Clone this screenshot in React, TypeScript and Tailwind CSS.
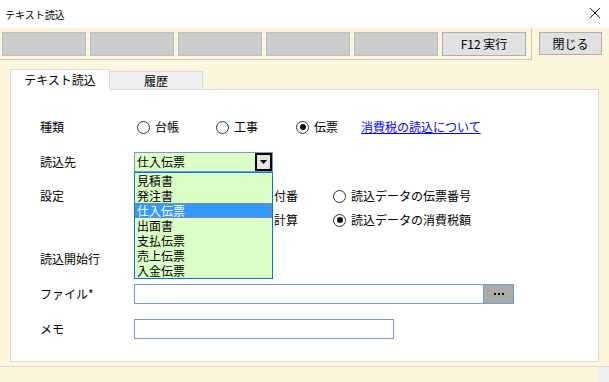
import React from 'react';

const font = { fontFamily: '"Noto Sans CJK JP", "Liberation Sans", sans-serif' };

const Radio = ({ checked, label, className = '' }: { checked?: boolean; label: string; className?: string }) => (
    <div className={`flex items-center gap-[5px] ${className}`}>
        <span className="w-[13px] h-[13px] rounded-full border border-[#333] bg-white flex items-center justify-center shrink-0">
            {checked && <span className="w-[6px] h-[6px] rounded-full bg-[#111]" />}
        </span>
        <span className="whitespace-nowrap">{label}</span>
    </div>
);

const App = () => {
    const items = ['見積書', '発注書', '仕入伝票', '出面書', '支払伝票', '売上伝票', '入金伝票'];

    return (
        <div className="w-[609px] h-[382px] bg-white overflow-hidden text-[12px] text-black flex flex-col" style={font}>
            {/* title bar */}
            <div className="h-[28px] flex items-center justify-between pl-[5px] pr-[8px] shrink-0">
                <span className="text-[10px]">テキスト読込</span>
                <svg width="12" height="12" viewBox="0 0 12 12" className="mb-[2px]">
                    <path d="M1 1 L11 11 M11 1 L1 11" stroke="#222" strokeWidth="1" />
                </svg>
            </div>

            <div className="flex-1 bg-[#fef6dc] flex flex-col">
                {/* toolbar */}
                <div className="flex items-start h-[32px]">
                    <div className="w-[532px] h-[32px] border-r border-b border-[#c4c4c4] flex gap-[4px] pl-[2px] pt-[4px]">
                        {[0, 1, 2, 3, 4].map((i) => (
                            <div key={i} className="w-[84px] h-[24px] bg-[#cccccc] border border-[#bfbfbf]" />
                        ))}
                        <button className="w-[84px] h-[24px] bg-[#e1e1e1] border border-[#adadad] text-[12px]">F12 実行</button>
                    </div>
                    <button className="ml-[7px] mt-[4px] w-[63px] h-[23px] bg-[#e1e1e1] border border-[#adadad] text-[12px]">閉じる</button>
                </div>

                {/* tabs */}
                <div className="flex items-end ml-[10px] mt-[9px] h-[20px]">
                    <div className="w-[100px] h-[21px] bg-white border border-b-0 border-[#d9d9d9] flex items-center justify-center relative top-[1px]">
                        テキスト読込
                    </div>
                    <div className="w-[93px] h-[18px] bg-[#f0f0f0] border border-b-0 border-l-0 border-[#d9d9d9] flex items-center justify-center">
                        履歴
                    </div>
                </div>

                {/* panel */}
                <div className="ml-[10px] w-[589px] h-[273px] bg-white border border-[#d9d9d9] pl-[29px] pt-[27px] flex flex-col">
                    <div className="flex items-center h-[20px]">
                        <span className="w-[94px]">種類</span>
                        <Radio label="台帳" className="ml-[3px] w-[79px]" />
                        <Radio label="工事" className="w-[80px]" />
                        <Radio checked label="伝票" className="w-[65px]" />
                        <a className="text-[#0000ff] underline whitespace-nowrap">消費税の読込について</a>
                    </div>

                    <div className="flex items-center h-[20px] mt-[15px]">
                        <span className="w-[94px]">読込先</span>
                        <div className="relative w-[139px] h-[20px] z-10">
                            <div className="w-full h-full bg-[#dcffc8] border border-[#7a9cc0] flex items-center justify-between pl-[2px]">
                                <span>仕入伝票</span>
                                <span className="w-[17px] h-[18px] bg-[#e3e3e3] border-2 border-black flex items-center justify-center">
                                    <svg width="7" height="4" viewBox="0 0 7 4">
                                        <path d="M0 0 H7 L3.5 4 Z" fill="#000" />
                                    </svg>
                                </span>
                            </div>
                            <div className="absolute left-0 top-full w-[139px] bg-[#dcffc8] border border-[#0078d7] flex flex-col">
                                {items.map((it) => (
                                    <div
                                        key={it}
                                        className={
                                            it === '仕入伝票'
                                                ? 'h-[15px] leading-[13px] pl-[1px] bg-[#3399ff] text-white border border-dotted border-[#c87a3a]'
                                                : 'h-[15px] leading-[15px] pl-[2px]'
                                        }
                                    >
                                        {it}
                                    </div>
                                ))}
                            </div>
                        </div>
                    </div>

                    {/* settings: left options are covered by the open list, only their tails show */}
                    <div className="flex items-center h-[20px] mt-[14px]">
                        <span className="w-[94px]">設定</span>
                        <div className="w-[199px] pl-[140px] flex items-center">
                            <span>付番</span>
                        </div>
                        <Radio label="読込データの伝票番号" />
                    </div>
                    <div className="flex items-center h-[20px] mt-[4px]">
                        <span className="w-[94px]" />
                        <div className="w-[199px] pl-[140px] flex items-center">
                            <span>計算</span>
                        </div>
                        <Radio checked label="読込データの消費税額" />
                    </div>

                    <div className="flex items-center h-[20px] mt-[19px]">
                        <span className="w-[94px]">読込開始行</span>
                        <div className="w-[60px] h-[20px] border border-[#7a9cc0]" />
                    </div>

                    <div className="flex items-center h-[20px] mt-[15px]">
                        <span className="w-[94px]">ファイル*</span>
                        <div className="w-[350px] h-[20px] border border-[#7a9cc0] bg-white" />
                        <button className="w-[30px] h-[20px] bg-[#aaaaaa] border border-l-0 border-[#7a9cc0] flex items-center justify-center">
                            <svg width="10" height="3" viewBox="0 0 10 3">
                                <rect x="0" y="0" width="2" height="2" fill="#000" />
                                <rect x="4" y="0" width="2" height="2" fill="#000" />
                                <rect x="8" y="0" width="2" height="2" fill="#000" />
                            </svg>
                        </button>
                    </div>

                    <div className="flex items-center h-[20px] mt-[15px]">
                        <span className="w-[94px]">メモ</span>
                        <div className="w-[260px] h-[20px] border border-[#7a9cc0] bg-white" />
                    </div>
                </div>

                {/* status strip */}
                <div className="mt-[4px] border-t border-[#d6d6d6] flex-1 flex">
                    <div className="w-[598px] bg-[#fef6dc]" />
                    <div className="flex-1 bg-[#efefef]" />
                </div>
            </div>
        </div>
    );
};

export default App;
